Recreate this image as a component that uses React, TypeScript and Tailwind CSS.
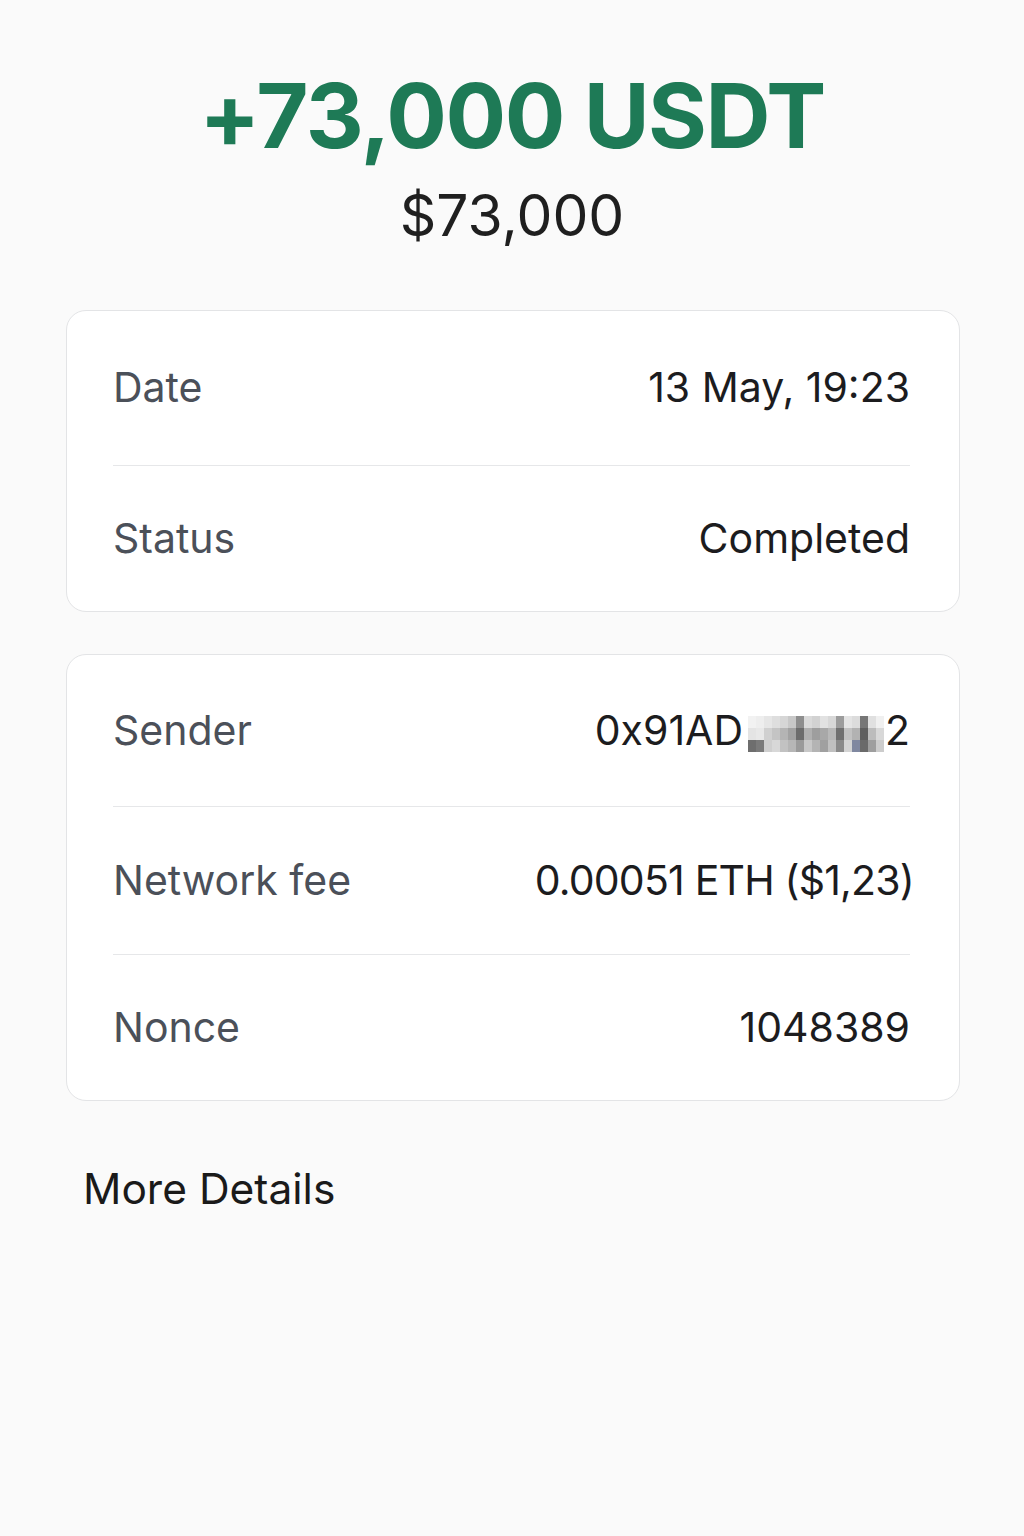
import React from 'react';

const font = { fontFamily: 'Inter, "Noto Sans", sans-serif' };

interface Row {
  label: string;
  value: React.ReactNode;
  height: string;
}

// pixelated (redacted) middle of the sender address, column by column, top to bottom
const pixels: string[][] = [
  ['bg-[#f2f2f2]', 'bg-[#e4e4e4]', 'bg-[#6e6e6e]'],
  ['bg-[#eeeeee]', 'bg-[#e8e8e8]', 'bg-[#7a7a7a]'],
  ['bg-[#e6e6e6]', 'bg-[#d0d0d0]', 'bg-[#cfcfcf]'],
  ['bg-[#dedede]', 'bg-[#c4c4c4]', 'bg-[#d8d8d8]'],
  ['bg-[#d6d6d6]', 'bg-[#b4b4b4]', 'bg-[#c2c2c2]'],
  ['bg-[#c8c8c8]', 'bg-[#a2a2a2]', 'bg-[#b6b6b6]'],
  ['bg-[#8e8e8e]', 'bg-[#6c6c6c]', 'bg-[#9a9a9a]'],
  ['bg-[#dadada]', 'bg-[#b0b0b0]', 'bg-[#c8c8c8]'],
  ['bg-[#d2d2d2]', 'bg-[#9e9e9e]', 'bg-[#b4b4b4]'],
  ['bg-[#e2e2e2]', 'bg-[#a8a8a8]', 'bg-[#a0a0a0]'],
  ['bg-[#d8d8d8]', 'bg-[#b8b8b8]', 'bg-[#c0c0c0]'],
  ['bg-[#9c9c9c]', 'bg-[#707070]', 'bg-[#8a8a8a]'],
  ['bg-[#e4e4e4]', 'bg-[#c2c2c2]', 'bg-[#d4d4d4]'],
  ['bg-[#dcdcdc]', 'bg-[#b2b2b2]', 'bg-[#8088a0]'],
  ['bg-[#767676]', 'bg-[#5e5e5e]', 'bg-[#6a6a6a]'],
  ['bg-[#e0e0e0]', 'bg-[#bcbcbc]', 'bg-[#9e9e9e]'],
  ['bg-[#f0f0f0]', 'bg-[#d8d8d8]', 'bg-[#cccccc]'],
];

const BlurredAddress: React.FC = () => (
  <span className="inline-flex items-center">
    <span>0x91AD</span>
    <span className="ml-[5px] mr-[1px] mt-[6px] flex">
      {pixels.map((col, i) => (
        <span key={i} className="flex flex-col">
          {col.map((c, j) => (
            <span key={j} className={`${c} block w-[8px] h-[12px]`} />
          ))}
        </span>
      ))}
    </span>
    <span>2</span>
  </span>
);

const Card: React.FC<{ rows: Row[] }> = ({ rows }) => (
  <div className="bg-white border border-[#e3e4e6] rounded-[20px] pl-[46px] pr-[49px]">
    {rows.map((row, i) => (
      <div
        key={row.label}
        className={`flex items-center justify-between ${row.height} ${i < rows.length - 1 ? 'border-b border-[#e6e7e9]' : ''}`}
      >
        <span className="text-[41px] text-[#4b5059] whitespace-nowrap">{row.label}</span>
        <span className="text-[41px] text-[#1c1c1e] whitespace-nowrap">{row.value}</span>
      </div>
    ))}
  </div>
);

export default function App() {
  return (
    <div className="min-h-screen bg-[#fafafa] pb-20" style={font}>
      <div className="flex flex-col items-center pt-[71px]">
        <h1 className="text-[90px] leading-none font-bold text-[#1e7a56] tracking-[-1.5px]">+73,000 USDT</h1>
        <p className="mt-[26px] text-[57px] leading-none text-[#1f1f1f]">$73,000</p>
      </div>

      <div className="pl-[66px] pr-[64px] mt-[66px] flex flex-col gap-[42px]">
        <Card
          rows={[
            { label: 'Date', value: '13 May, 19:23', height: 'h-[155px]' },
            { label: 'Status', value: 'Completed', height: 'h-[145px]' },
          ]}
        />
        <Card
          rows={[
            { label: 'Sender', value: <BlurredAddress />, height: 'h-[152px]' },
            {
              label: 'Network fee',
              value: <span className="inline-block tracking-[-0.8px] mr-[-4px]">0.00051 ETH ($1,23)</span>,
              height: 'h-[148px]',
            },
            { label: 'Nonce', value: '1048389', height: 'h-[145px]' },
          ]}
        />
      </div>

      <div className="pl-[83px] mt-[67px]">
        <span className="text-[42.5px] leading-none text-[#1a1a1a]">More Details</span>
      </div>
    </div>
  );
}
